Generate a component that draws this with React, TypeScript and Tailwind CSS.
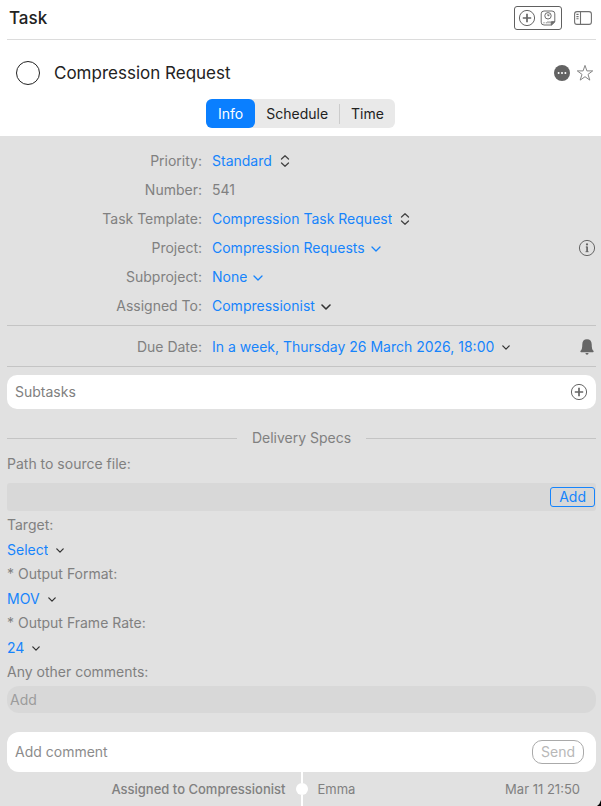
import React, { useState } from 'react';

type Tone = 'blue' | 'dark';

interface PickerProps {
  id: string;
  options: string[];
  tone?: Tone;
  stepper?: boolean;
  compact?: boolean;
}

const DownChevron = ({ tone, compact }: { tone: Tone; compact?: boolean }) => (
  <svg
    viewBox="0 0 10 6"
    className={compact ? 'mt-0.5 h-[5px] w-2 shrink-0' : 'mt-0.5 h-1.5 w-2.5 shrink-0'}
    fill="none"
    stroke={tone === 'blue' ? '#1684fc' : '#333333'}
    strokeWidth={tone === 'blue' ? 1.3 : 1.6}
    strokeLinecap="round"
    strokeLinejoin="round"
  >
    <path d="M1 1l4 4 4-4" />
  </svg>
);

const UpDownChevron = () => (
  <svg viewBox="0 0 10 14" className="h-3.5 w-2.5 shrink-0" fill="none" stroke="#444444" strokeWidth="1.3" strokeLinecap="round" strokeLinejoin="round">
    <path d="M1.500 5L5 1.800 8.500 5M1.500 9L5 12.200 8.500 9" />
  </svg>
);

const PlusCircle = () => (
  <svg viewBox="0 0 18 18" className="size-[18px]" fill="none" stroke="#666666">
    <circle cx="9" cy="9" r="7.6" strokeWidth="1" />
    <path d="M9 4.800v8.400M4.800 9h8.400" strokeWidth="1.700" />
  </svg>
);

const TimeNoteIcon = () => (
  <svg viewBox="0 0 16 16" className="size-4" fill="none" stroke="#6c6c6c" strokeWidth="1">
    <path d="M11.5 15H4a2.8 2.8 0 0 1-2.8-2.8V3.8A2.8 2.8 0 0 1 4 1h8a2.8 2.8 0 0 1 2.8 2.8v8z" />
    <circle cx="8" cy="5.8" r="3.2" />
    <path d="M8 4v2l1.6-1" />
    <path d="M3.500 12.800h1M5.800 12.800h1M8 13.300v-2M10 13.300v-2" />
    <path d="M11.3 15v-3.300h3.500z" fill="#6c6c6c" />
  </svg>
);

const SidebarIcon = () => (
  <svg viewBox="0 0 18 14" className="h-3.5 w-[18px]" fill="none" stroke="#707070" strokeWidth="1.1">
    <rect x="0.6" y="0.6" width="16.8" height="12.8" rx="2.4" />
    <path d="M6.500 0.600v12.800M2.400 3.400h2.200M2.400 5.600h2.200M2.400 7.800h2.200" />
  </svg>
);

const MoreIcon = () => (
  <svg viewBox="0 0 16 16" className="size-4">
    <circle cx="8" cy="8" r="8" fill="#636363" />
    <circle cx="4.6" cy="8" r="1" fill="#ffffff" />
    <circle cx="8" cy="8" r="1" fill="#ffffff" />
    <circle cx="11.4" cy="8" r="1" fill="#ffffff" />
  </svg>
);

const StarIcon = () => (
  <svg viewBox="0 0 18 18" className="size-[18px]" fill="none" stroke="#858585" strokeWidth="1">
    <path d="M9 1.400l1.900 5.500h5.800l-4.700 3.500 1.800 5.700L9 12.700l-4.800 3.400L6 10.400 1.300 6.900h5.800z" />
  </svg>
);

const InfoIcon = () => (
  <svg viewBox="0 0 18 18" className="size-[18px]" fill="none" stroke="#666666">
    <circle cx="9" cy="9" r="7.6" strokeWidth="1" />
    <circle cx="9" cy="5.400" r="1.100" fill="#666666" stroke="none" />
    <path d="M7.800 8H9" strokeWidth="1" />
    <path d="M9.100 7.500v5.500" strokeWidth="1.700" />
    <path d="M7.500 12.700h3.200" strokeWidth="0.800" />
  </svg>
);

const BellIcon = () => (
  <svg viewBox="0 0 14 16" className="h-4 w-3.5" fill="#666666">
    <path d="M7 0.300C4 0.300 2.300 2.300 2.300 5.200c0 4-.6 5.500-1.700 6.600-.5.6-.3 1.400.5 1.400h11.800c.8 0 1-.8.5-1.400-1.100-1.100-1.700-2.600-1.700-6.600C11.700 2.300 10 .3 7 .3z" />
    <path d="M5.500 14h3c0 1-.6 1.700-1.500 1.700S5.500 15 5.500 14z" />
  </svg>
);

const Picker = ({ id, options, tone = 'dark', stepper, compact }: PickerProps) => (
  <div className={stepper || compact ? 'flex items-center gap-2' : 'flex items-center gap-1.5'}>
    <select id={id} className="field-sizing-content cursor-pointer appearance-none bg-transparent text-[#1684fc] outline-none">
      {options.map(option => (
        <option key={option}>{option}</option>
      ))}
    </select>
    {stepper ? <UpDownChevron /> : <DownChevron tone={tone} compact={compact} />}
  </div>
);

const Row = ({ label, htmlFor, children }: { label: string; htmlFor?: string; children: React.ReactNode }) => (
  <div className="grid min-h-[29px] grid-cols-[195px_1fr] items-center gap-2.5">
    <label htmlFor={htmlFor} className="text-right">{label}</label>
    <div className="flex items-center justify-between">{children}</div>
  </div>
);

const specs = [
  { id: 'target', label: 'Target:', options: ['Select'] },
  { id: 'format', label: '* Output Format:', options: ['MOV', 'MP4'] },
  { id: 'frame-rate', label: '* Output Frame Rate:', options: ['24', '25', '30'] },
];

const tabs = ['Info', 'Schedule', 'Time'];

const App: React.FC = () => {
  const [activeTab, setActiveTab] = useState('Info');
  const [comment, setComment] = useState('');

  return (
    <div className="relative flex min-h-screen flex-col overflow-hidden bg-[#e1e1e1] font-['Inter',sans-serif] text-sm leading-5 text-[#808080]">
      <div className="bg-white pb-2 text-[#222222]">
        <header className="ml-[7px] mr-[5px] flex h-10 items-center justify-between border-b border-[#dcdcdc] pb-1 pl-0.5 pr-1">
          <h1 className="text-[17px] font-medium">Task</h1>
          <div className="flex items-center gap-3">
            <div className="flex h-6 items-center gap-1 rounded-[3px] border border-[#606060] pl-[3px] pr-[5px]">
              <button aria-label="Add task"><PlusCircle /></button>
              <button aria-label="Log time"><TimeNoteIcon /></button>
            </div>
            <button aria-label="Toggle sidebar"><SidebarIcon /></button>
          </div>
        </header>

        <div className="flex h-[59px] items-center gap-3.5 pl-4 pr-[7px] pt-1.5">
          <input
            type="checkbox"
            id="done"
            className="size-6 shrink-0 cursor-pointer appearance-none rounded-full border border-[#222222] checked:bg-[#0a84ff]"
          />
          <label htmlFor="done" className="flex-1 text-[17px]">Compression Request</label>
          <div className="flex items-center gap-1.5">
            <button aria-label="More"><MoreIcon /></button>
            <button aria-label="Favourite"><StarIcon /></button>
          </div>
        </div>

        <nav className="flex justify-center">
          <div className="flex h-[29px] items-center rounded-md bg-[#e9e9e9]">
            {tabs.map(tab => (
              <React.Fragment key={tab}>
                {tab === 'Time' && <span className="h-5 w-px bg-[#cccccc]" />}
                <button
                  onClick={() => setActiveTab(tab)}
                  className={activeTab === tab ? 'h-full rounded-md bg-[#0a7fff] px-3 text-white' : 'h-full px-[11px]'}
                >
                  {tab}
                </button>
              </React.Fragment>
            ))}
          </div>
        </nav>
      </div>

      <main className="flex flex-1 flex-col pl-[7px] pr-[5px] pt-2.5">
        <section className="border-b border-[#c4c4c4] pb-[5px]">
          <Row label="Priority:" htmlFor="priority">
            <Picker id="priority" options={['Standard', 'High', 'Low']} stepper />
          </Row>
          <Row label="Number:">
            <span>541</span>
          </Row>
          <Row label="Task Template:" htmlFor="template">
            <Picker id="template" options={['Compression Task Request']} stepper />
          </Row>
          <Row label="Project:" htmlFor="project">
            <Picker id="project" options={['Compression Requests']} tone="blue" />
            <button aria-label="Project info"><InfoIcon /></button>
          </Row>
          <Row label="Subproject:" htmlFor="subproject">
            <Picker id="subproject" options={['None']} tone="blue" />
          </Row>
          <Row label="Assigned To:" htmlFor="assignee">
            <Picker id="assignee" options={['Compressionist']} />
          </Row>
        </section>

        <section className="border-b border-[#c4c4c4] pb-[5px] pt-1.5">
          <Row label="Due Date:" htmlFor="due">
            <Picker id="due" options={['In a week, Thursday 26 March 2026, 18:00']} compact />
            <button aria-label="Reminder" className="pr-0.5"><BellIcon /></button>
          </Row>
        </section>

        <section className="mt-2 flex h-[34px] items-center justify-between rounded-[10px] bg-white px-2">
          <h2>Subtasks</h2>
          <button aria-label="Add subtask"><PlusCircle /></button>
        </section>

        <div className="mt-[19px] flex items-center gap-[15px]">
          <span className="h-px flex-1 bg-[#c4c4c4]" />
          <h2>Delivery Specs</h2>
          <span className="h-px flex-1 bg-[#c4c4c4]" />
        </div>

        <label htmlFor="source" className="mt-1.5">Path to source file:</label>
        <div className="mb-0.5 mt-[9px] flex h-7 items-center rounded-[3px] bg-[#d8d8d8] pr-px">
          <input id="source" className="h-full min-w-0 flex-1 bg-transparent px-1 outline-none" />
          <button className="flex h-5 items-center rounded-[3px] border border-[#1684fc] px-2 text-[#1684fc]">Add</button>
        </div>

        {specs.map(spec => (
          <div key={spec.id}>
            <label htmlFor={spec.id} className="flex h-6 items-center">{spec.label}</label>
            <div className="flex h-[25px] items-center">
              <Picker id={spec.id} options={spec.options} compact />
            </div>
          </div>
        ))}

        <label htmlFor="other" className="flex h-6 items-center">Any other comments:</label>
        <input
          id="other"
          placeholder="Add"
          className="mt-0.5 h-[27px] rounded-[12px] bg-[#d8d8d8] px-[3px] outline-none placeholder:text-[#9c9c9c]"
        />

        <form className="mt-[19px] flex h-10 items-center rounded-[12px] bg-white pl-2 pr-3" onSubmit={e => e.preventDefault()}>
          <input
            aria-label="Add comment"
            placeholder="Add comment"
            value={comment}
            onChange={e => setComment(e.target.value)}
            className="min-w-0 flex-1 outline-none placeholder:text-[#8c8c8c]"
          />
          <button disabled={!comment} className="h-6 rounded-[10px] border border-[#aaaaaa] px-2 text-[#b8b8b8]">
            Send
          </button>
        </form>

        <div className="grid min-h-[34px] flex-1 grid-cols-[1fr_12px_1fr] gap-2.5 text-[13px]">
          <span className="self-center text-right font-medium">Assigned to Compressionist</span>
          <div className="flex flex-col items-center">
            <span className="w-0.5 flex-1 bg-white" />
            <span className="size-3 rounded-full bg-white" />
            <span className="w-0.5 flex-1 bg-white" />
          </div>
          <div className="flex items-center justify-between pr-4">
            <span>Emma</span>
            <time>Mar 11 21:50</time>
          </div>
        </div>
      </main>

      {/* window corner */}
      <svg viewBox="0 0 4 6" className="absolute bottom-0 right-0 h-1.5 w-1">
        <path d="M4 0v6H0Q3 4 4 0z" fill="#000000" />
      </svg>
    </div>
  );
};

export default App;
